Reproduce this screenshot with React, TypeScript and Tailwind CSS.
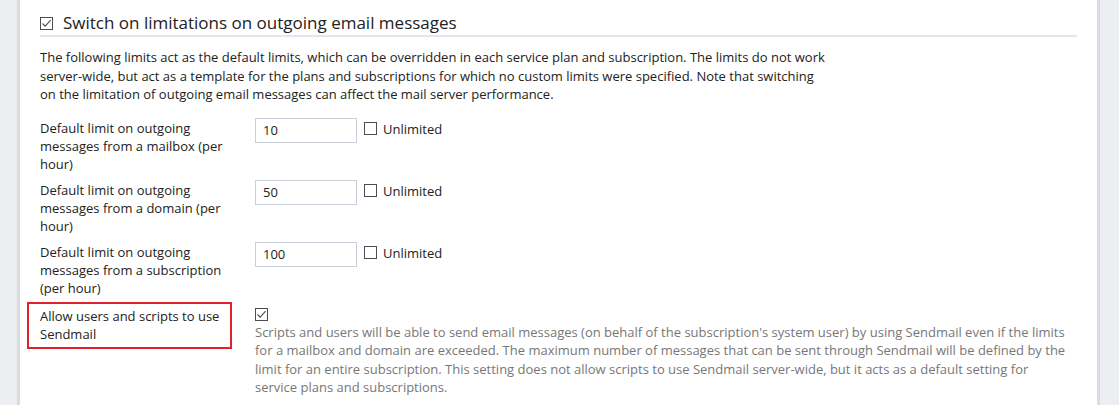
import React from "react";

function Box({ checked }: { checked?: boolean }) {
  return (
    <span className="inline-flex h-[13px] w-[13px] shrink-0 items-center justify-center border border-[#4d4d4d] bg-white">
      {checked && (
        <svg width="11" height="11" viewBox="0 0 11 11" fill="none">
          <path d="M1.5 5.5 L4.2 8.2 L9.6 2.2" stroke="#4d4d4d" strokeWidth="1.1" />
        </svg>
      )}
    </span>
  );
}

const limits = [
  { label: "Default limit on outgoing messages from a mailbox (per hour)", value: "10" },
  { label: "Default limit on outgoing messages from a domain (per hour)", value: "50" },
  { label: "Default limit on outgoing messages from a subscription (per hour)", value: "100" },
];

export default function App() {
  return (
    <div
      className="flex h-[405px] w-[1119px] overflow-hidden bg-white text-[13px] leading-[18.5px] text-[#222]"
      style={{ fontFamily: '"Open Sans", "Noto Sans", sans-serif' }}
    >
      <div className="w-[20px] shrink-0 border-r-[3px] border-[#d9dce1] bg-[#eceef2]" />
      <div className="flex-1 pl-[20px] pr-[20px] pt-[12px]">
        <div className="flex items-center gap-[10px] border-b-2 border-[#e4e6ee] pb-[1px]">
          <Box checked />
          <span className="text-[17px] leading-[22px] text-[#222]">Switch on limitations on outgoing email messages</span>
        </div>
        <p className="mt-[11px] max-w-[792px]">
          The following limits act as the default limits, which can be overridden in each service plan and subscription. The limits do not work server-wide, but act as a template for the plans and subscriptions for which no custom limits were specified. Note that switching on the limitation of outgoing email messages can affect the mail server performance.
        </p>
        <div className="mt-[14px] flex flex-col gap-[7px]">
          {limits.map((l) => (
            <div key={l.value} className="grid grid-cols-[215px_1fr]">
              <div className="pr-[25px] pt-[1px] leading-[18px]">{l.label}</div>
              <div className="flex items-start gap-[7px]">
                <input
                  readOnly
                  value={l.value}
                  className="h-[25px] w-[102px] border border-[#c9ced8] px-[7px] text-[13px] text-[#222] outline-none"
                  style={{ fontFamily: '"Open Sans", sans-serif' }}
                />
                <label className="mt-[2px] flex items-center gap-[6px]">
                  <Box />
                  <span>Unlimited</span>
                </label>
              </div>
            </div>
          ))}
          <div className="mt-[1px] grid grid-cols-[215px_1fr]">
            <div className="relative pr-[20px] pt-[2px] leading-[18px]">
              <div className="absolute left-[-13px] top-[-3px] h-[47px] w-[205px] border-2 border-[#e3202b]" />
              Allow users and scripts to use Sendmail
            </div>
            <div className="pr-[4px] pt-[3px]">
              <div className="flex">
                <Box checked />
              </div>
              <p className="mt-[2px] text-[#777]">
                Scripts and users will be able to send email messages (on behalf of the subscription's system user) by using Sendmail even if the limits for a mailbox and domain are exceeded. The maximum number of messages that can be sent through Sendmail will be defined by the limit for an entire subscription. This setting does not allow scripts to use Sendmail server-wide, but it acts as a default setting for service plans and subscriptions.
              </p>
            </div>
          </div>
        </div>
      </div>
      <div className="w-[22px] shrink-0 border-l-[3px] border-[#d9dce1] bg-[#eceef2]" />
    </div>
  );
}
